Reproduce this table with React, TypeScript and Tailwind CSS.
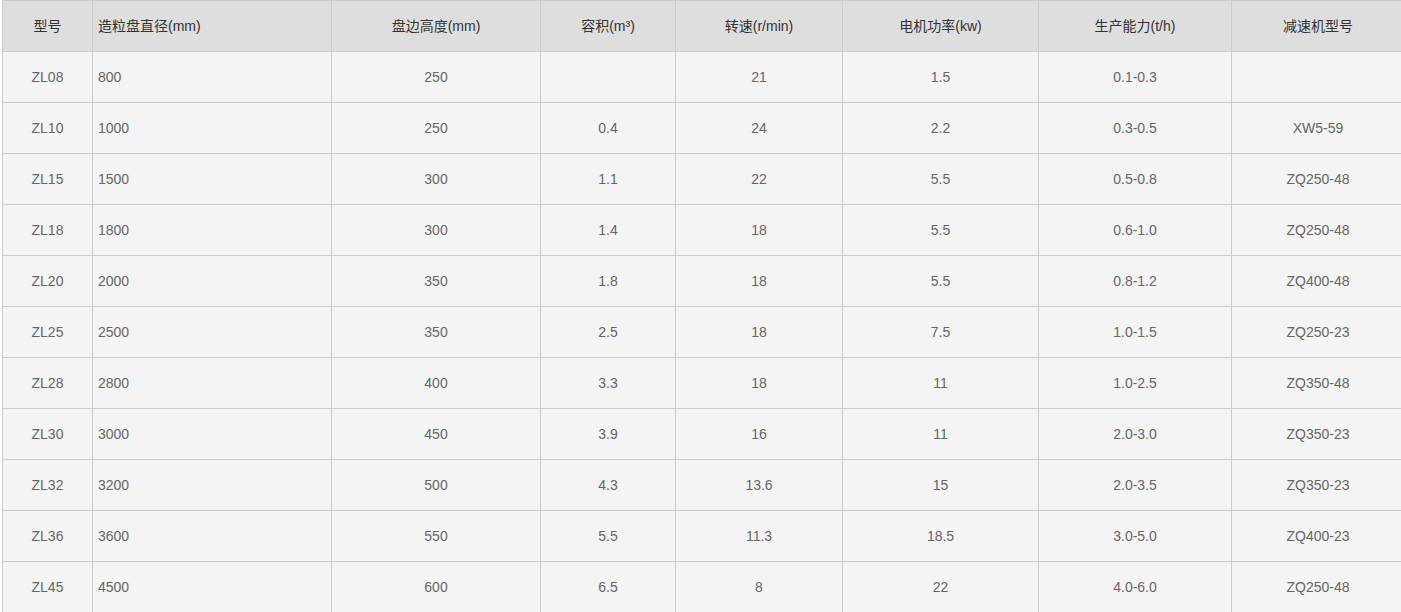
const headers = [
  "型号",
  "造粒盘直径(mm)",
  "盘边高度(mm)",
  "容积(m³)",
  "转速(r/min)",
  "电机功率(kw)",
  "生产能力(t/h)",
  "减速机型号",
];

const widths = ["w-[90px]", "w-[239px]", "w-[209px]", "w-[135px]", "w-[167px]", "w-[196px]", "w-[193px]", "w-[173px]"];

const rows = [
  ["ZL08", "800", "250", "", "21", "1.5", "0.1-0.3", ""],
  ["ZL10", "1000", "250", "0.4", "24", "2.2", "0.3-0.5", "XW5-59"],
  ["ZL15", "1500", "300", "1.1", "22", "5.5", "0.5-0.8", "ZQ250-48"],
  ["ZL18", "1800", "300", "1.4", "18", "5.5", "0.6-1.0", "ZQ250-48"],
  ["ZL20", "2000", "350", "1.8", "18", "5.5", "0.8-1.2", "ZQ400-48"],
  ["ZL25", "2500", "350", "2.5", "18", "7.5", "1.0-1.5", "ZQ250-23"],
  ["ZL28", "2800", "400", "3.3", "18", "11", "1.0-2.5", "ZQ350-48"],
  ["ZL30", "3000", "450", "3.9", "16", "11", "2.0-3.0", "ZQ350-23"],
  ["ZL32", "3200", "500", "4.3", "13.6", "15", "2.0-3.5", "ZQ350-23"],
  ["ZL36", "3600", "550", "5.5", "11.3", "18.5", "3.0-5.0", "ZQ400-23"],
  ["ZL45", "4500", "600", "6.5", "8", "22", "4.0-6.0", "ZQ250-48"],
];

export default function App() {
  return (
    <div className="h-[612px] w-[1401px] overflow-hidden bg-white pl-[2px] font-['Liberation_Sans','Noto_Sans_CJK_SC',sans-serif] text-[14px]">
      <table className="w-[1402px] table-fixed border-collapse">
        <colgroup>
          {widths.map((w, i) => (
            <col key={i} className={w} />
          ))}
        </colgroup>
        <thead>
          <tr className="h-[51px] bg-[#dedede]">
            {headers.map((h, i) => (
              <th
                key={h}
                className={`border border-[#cccccc] font-normal text-[#333] ${i === 1 ? "pl-[5px] text-left" : "px-[6px] text-center"}`}
              >
                {h}
              </th>
            ))}
          </tr>
        </thead>
        <tbody>
          {rows.map((r) => (
            <tr key={r[0]} className="h-[51px] bg-[#f4f4f4]">
              {r.map((c, i) => (
                <td
                  key={i}
                  className={`border border-[#cccccc] text-[#666] ${i === 1 ? "pl-[5px] text-left" : "px-[6px] text-center"}`}
                >
                  {c}
                </td>
              ))}
            </tr>
          ))}
        </tbody>
      </table>
    </div>
  );
}
